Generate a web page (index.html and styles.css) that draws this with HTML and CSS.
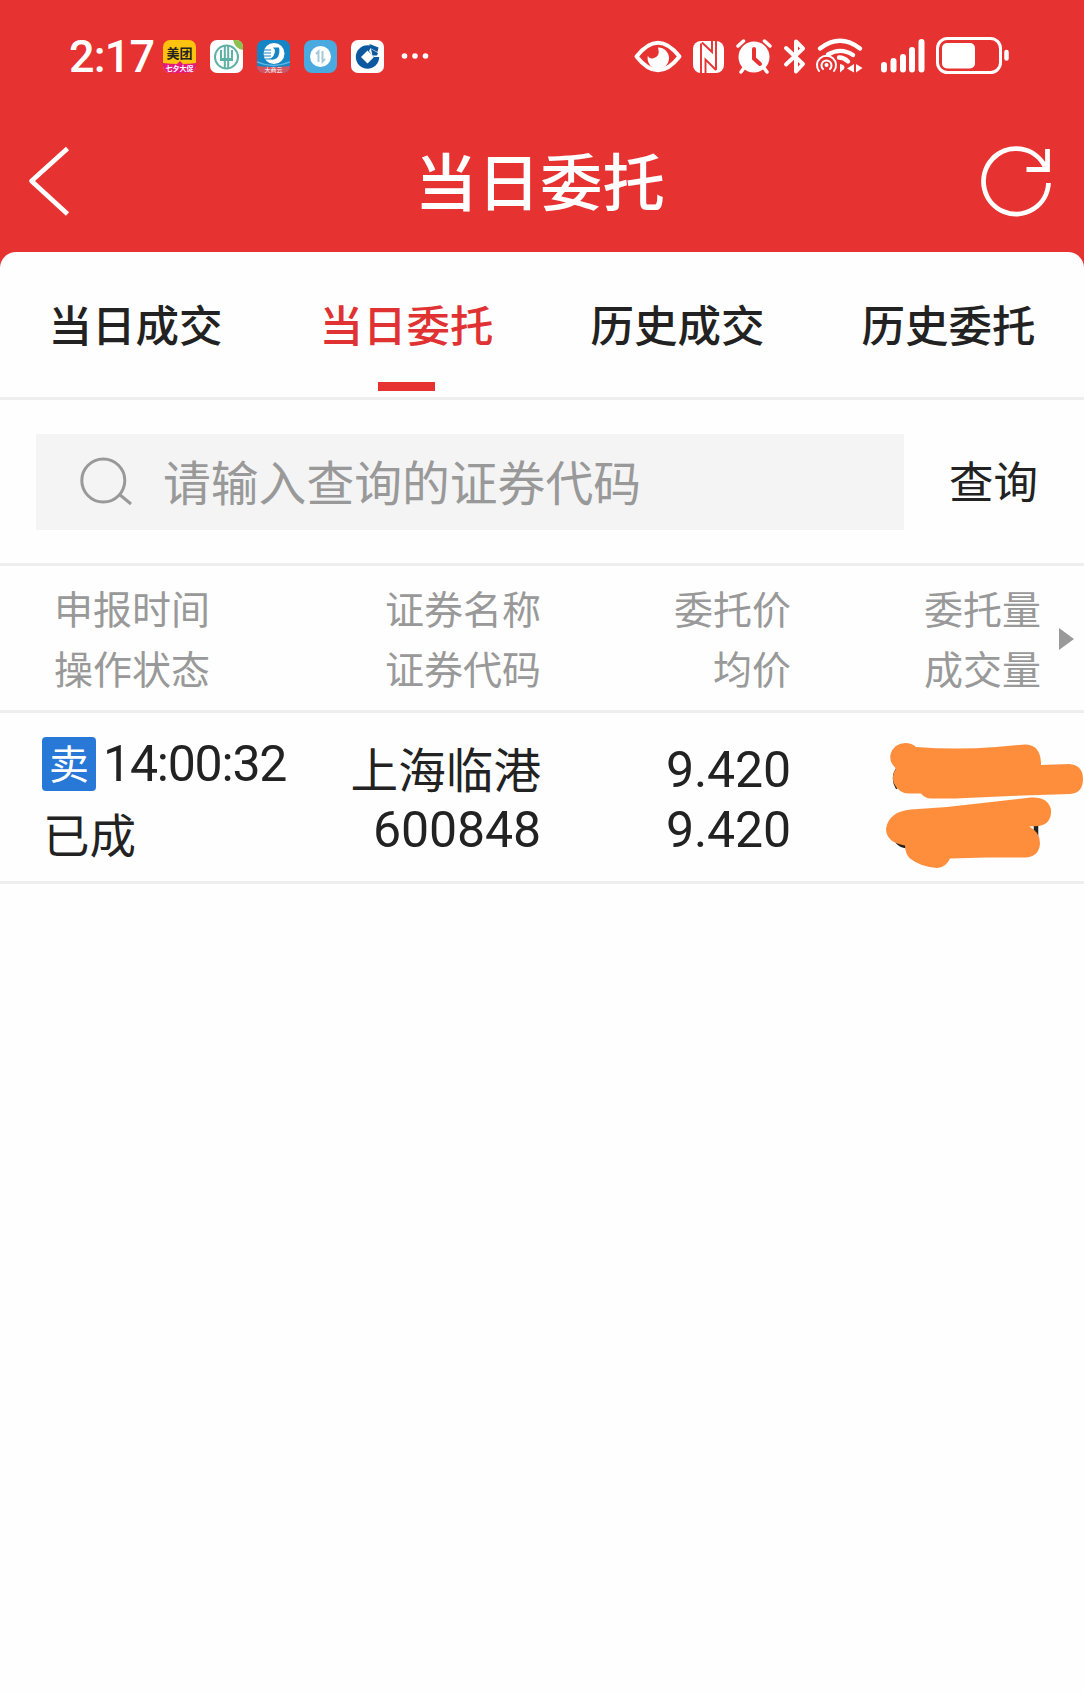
FILE: index.html
```html
<!DOCTYPE html>
<html lang="zh-CN">
<head>
<meta charset="utf-8">
<title>当日委托</title>
<link rel="stylesheet" href="styles.css">
</head>
<body>
<header class="top">
  <div class="status">
    <span class="clock">2:17</span>
    <div class="apps">
      <svg class="app" viewBox="0 0 33 33"><defs><clipPath id="r"><rect width="33" height="33" rx="7"/></clipPath></defs><g clip-path="url(#r)"><rect width="33" height="33" fill="#ffc20e"/><path d="M0 23q8 1 14 1l3-3 3 3q7 0 13-1v10H0z" fill="#e5187e"/></g><text x="16.5" y="18" class="app-name">美团</text><text x="16.5" y="31" class="app-promo">七夕大促</text></svg>
      <svg class="app" viewBox="0 0 33 33"><rect width="33" height="33" rx="7" fill="#fff"/><path d="M23 0h3q7 0 7 7v3Q25 9 23 0z" fill="#8cc152"/><g fill="none" stroke="#5fb0a5"><circle cx="16.500" cy="17" r="11.500" stroke-width="2"/><path d="M14.800 5v15M18.200 5v15M11 10v9h11v-9" stroke-width="2"/><path d="M14.800 21v7M18.200 21v7M10 20h13" stroke-width="2"/></g></svg>
      <svg class="app" viewBox="0 0 33 33"><g clip-path="url(#r)"><rect width="33" height="33" fill="#1585c5"/><path d="M0 26q16 2 33 0v7H0z" fill="#d5545f"/><path d="M0 22q16 7 33 0" fill="none" stroke="#5db6df" stroke-width="1.500"/></g><circle cx="17" cy="13.500" r="10.500" fill="#fff"/><path d="M16 7.500h6q1.500 6-2 10.500-4 3-8 1 6-2 6-9z" fill="#1585c5"/><path d="M6 10h8M5 13h9M6 16h8M8 19h5" stroke="#1585c5" stroke-width="1"/><text x="16.500" y="32" class="app-cloud">大商云</text></svg>
      <svg class="app" viewBox="0 0 33 33"><rect width="33" height="33" rx="8" fill="#4aa9df"/><circle cx="16.500" cy="16.500" r="10.500" fill="#fff"/><path d="M12 14l2.500-2.500V22M18.500 11v10.500L21 19" fill="none" stroke="#a5c9d9" stroke-width="2"/></svg>
      <svg class="app" viewBox="0 0 33 33"><rect width="33" height="33" rx="7" fill="#fff"/><circle cx="16.500" cy="17" r="11.700" fill="#0b58a0"/><path d="M16.500 10.500L23 17l-6.500 6.500L10 17zM18 11l4.500 6H33v-4l-4-5-8-3z" fill="#fff"/><path d="M18.500 4l9 3.500-1 4.500-7.500-4zM20 9l7 4-1 2.500h-4.500z" fill="#0b58a0"/></svg>
    </div>
    <svg class="more" viewBox="0 0 28 8" fill="#fff"><circle cx="3.500" cy="4" r="2.800"/><circle cx="14" cy="4" r="2.800"/><circle cx="24.500" cy="4" r="2.800"/></svg>
    <svg class="system" viewBox="630 30 390 50" fill="none" stroke="#fff" stroke-linecap="round">
      <path d="M637.500 56.500Q659 29 680.500 56.500Q659 84 637.500 56.500z" stroke-width="4" stroke-linejoin="round"/>
      <path d="M659 47.500a10.700 10.700 0 1 1-10.200 8.500q2 3 5 2.500 8-2 5.200-11z" fill="#fff" stroke="none"/>
      <rect x="694" y="41" width="31" height="32" rx="8" fill="#fff" stroke="none"/>
      <path d="M702 43.500V73M717 41v29M703 42.500L713 52V41M706.500 73V59.500L717 70" stroke="#e73232" stroke-width="1.900" stroke-linecap="butt"/>
      <circle cx="755" cy="57" r="15.500" fill="#fff" stroke="none"/>
      <path d="M739 46l5.500-5M771 46l-5.500-5M745 68l-3 4M765 68l3 4" stroke-width="3.500"/>
      <path d="M755 49v9.500l6 5.500" stroke="#e73232" stroke-width="4"/>
      <path d="M787 48l17 16-7 7.500V41.500l7 7-17 16" stroke-width="4" stroke-linejoin="round"/>
      <path d="M821 48.500Q841 33 861 48.500M829 54.500Q842 47 854 55M840 57.500q5 0 9 4" stroke-width="4.400"/>
      <path d="M820 71a9.500 9.500 0 1 1 15 0M824 69a5 5 0 1 1 7 0" stroke-width="2"/><circle cx="827.500" cy="65" r="2" fill="#fff" stroke="none"/>
      <path d="M841 64q6 1 4 5l-4 3.500zM855 64v8.500l-7-4zM857 64l6.500 4-6.500 4.500z" fill="#fff" stroke="none"/>
      <path d="M885 65v4.500M894.500 61v8.500M904 57v12.500M913 50v19.500M922.500 42v27.500" stroke-width="6"/>
      <rect x="938.500" y="38.500" width="63" height="34" rx="10" stroke-width="3"/><rect x="943" y="43" width="33" height="25.500" rx="5" fill="#fff" stroke="none"/><path d="M1007.500 52v6.500" stroke-width="4.500"/>
    </svg>
  </div>
  <div class="titlebar">
    <svg class="back" viewBox="26 144 46 74"><path d="M67.500 148.500L31.500 181l36 33" fill="none" stroke="#fff" stroke-width="4.700" stroke-linejoin="round"/></svg>
    <h1 class="title">当日委托</h1>
    <svg class="refresh" viewBox="981 145 74 74" fill="none" stroke="#fff" stroke-width="4.800"><path d="M1049.500 183A32.500 32.700 0 1 1 1046 166.500M1048.500 149v20.500h-21"/></svg>
  </div>
</header>
<main class="panel">
  <nav class="tabs">
    <a class="tab">当日成交</a>
    <a class="tab tab-active">当日委托</a>
    <a class="tab">历史成交</a>
    <a class="tab">历史委托</a>
  </nav>
  <section class="search">
    <div class="field">
      <svg class="lens" viewBox="80 457 54 50" fill="none" stroke="#999" stroke-width="3"><circle cx="103.300" cy="480.500" r="21.500"/><path d="M119.500 494.500L131 504"/></svg>
      <span class="placeholder">请输入查询的证券代码</span>
    </div>
    <span class="query">查询</span>
  </section>
  <section class="columns">
    <div class="cell cell-first">申报时间<br>操作状态</div>
    <div class="cell">证券名称<br>证券代码</div>
    <div class="cell">委托价<br>均价</div>
    <div class="cell">委托量<br>成交量</div>
    <svg class="next" viewBox="0 0 15 22"><path d="M0 0L15 11 0 22z" fill="#999"/></svg>
  </section>
  <section class="order">
    <div class="when">
      <div class="when-line"><span class="side">卖</span><span class="time">14:00:32</span></div>
      <div class="state">已成</div>
    </div>
    <div class="value"><span class="name">上海临港</span><span class="number">600848</span></div>
    <div class="value"><span class="number">9.420</span><span class="number">9.420</span></div>
    <svg class="redacted" viewBox="885 737 200 136">
      <path d="M899 769q-6 9 0 19M909 814q-8 1-11 6M898 841q4 5 11 5M1037 824v16" fill="none" stroke="#222" stroke-width="4.500"/>
      <path d="M906 743q7 0 11 4 40 3 80 0l29-2.500q15 0 16 18v2.500l28-1q14 1 14 15 0 14-13 15l-59 2-56 2.500h-24q-6 0-10-5h-12q-10 0-15-10-3-8 2-15-7-6-5.500-14 3-11 14.500-11.500z" fill="#ff8e3c"/>
      <path d="M912 809.500l36-2.500 84-9.500q17-1 20 12 1 14-12 16.500l-10 .5q11 5 11 17-1 13-14 14h-40l-36 1q-4 9-13 9.500-16-1-27-9.500-5-5-5-13-19-3-19-17 3-17 25-19z" fill="#ff8e3c"/>
    </svg>
  </section>
</main>
</body>
</html>
```

FILE: styles.css
```css
* { box-sizing: border-box; }
body {
  margin: 0;
  min-height: 1694px;
  background: #fefefe;
  color: #222;
  font-family: "Noto Sans CJK SC", sans-serif;
}
svg { display: block; flex: none; }
.top { height: 270px; background: #e73232; color: #fff; }
.status { display: flex; align-items: center; height: 112px; padding-left: 69px; }
.clock { width: 94px; font-family: Roboto, sans-serif; font-size: 45px; line-height: 60px; font-weight: 500; letter-spacing: -0.8px; margin-top: 2px; }
.apps { display: flex; gap: 14px; }
.app { width: 33px; height: 33px; }
.app-name { font-size: 13px; font-weight: 700; text-anchor: middle; fill: #222; }
.app-promo { font-size: 7px; font-weight: 700; text-anchor: middle; fill: #fff; }
.app-cloud { font-size: 6px; text-anchor: middle; fill: #fff; }
.more { width: 28px; height: 8px; margin-left: 17px; }
.system { width: 390px; height: 50px; margin-left: 200px; margin-top: -2px; }
.titlebar { display: flex; justify-content: space-between; align-items: center; height: 138px; padding: 0 30px 0 26px; }
.back { width: 46px; height: 74px; margin-right: 28px; }
.title { margin: -5px 0 0; font-size: 62.5px; line-height: 90px; font-weight: 500; letter-spacing: 0.1px; }
.refresh { width: 74px; height: 74px; margin-top: 1px; }
.panel { margin-top: -18px; background: #fefefe; border-radius: 16px 16px 0 0; }
.tabs { display: grid; grid-template-columns: repeat(4, 1fr); height: 148px; border-bottom: 3px solid #eee; }
.tab { display: flex; flex-direction: column; align-items: center; padding-top: 42px; font-size: 43.5px; line-height: 60px; font-weight: 500; }
.tab-active { color: #e03232; }
.tab-active::after { content: ""; width: 57px; height: 9px; margin-top: 28px; background: #e73232; }
.search { display: flex; height: 166px; padding: 34px 0 0 36px; border-bottom: 3px solid #eee; }
.field { display: flex; align-items: center; width: 868px; height: 96px; padding-left: 44px; background: #f4f4f4; }
.lens { width: 54px; height: 50px; }
.placeholder { margin: -3px 0 0 29px; font-size: 47.8px; line-height: 70px; color: #999; }
.query { margin-left: 45px; font-size: 44.5px; line-height: 91px; font-weight: 400; }
.columns { display: grid; grid-template-columns: 291px 250px 250px 250px 43px; height: 147px; padding-top: 11px; border-bottom: 3px solid #eee; font-size: 39px; line-height: 60px; color: #999; }
.cell { text-align: right; }
.cell-first { text-align: left; padding-left: 54px; }
.next { width: 15px; height: 22px; margin: 51px 0 0 18px; }
.order { display: grid; grid-template-columns: 291px 250px 250px 93px 200px; height: 171px; border-bottom: 3px solid #eee; padding-top: 24px; font-size: 48px; line-height: 60px; }
.when { padding-left: 42px; }
.when-line { display: flex; height: 54px; gap: 7px; }
.side { width: 54px; height: 54px; border-radius: 4px; background: #2878d8; color: #fff; font-size: 40px; line-height: 50px; text-align: center; }
.time, .number { font-family: Roboto, sans-serif; font-size: 50px; }
.time { line-height: 54px; letter-spacing: -1.2px; }
.state { padding-left: 1px; font-size: 46.5px; line-height: 84px; }
.value { display: flex; flex-direction: column; align-items: flex-end; padding-top: 2px; }
.name { font-size: 47.6px; margin: -1px 0 1px; }
.number { letter-spacing: -0.1px; padding-top: 1px; height: 60px; }
.redacted { grid-column: 5; width: 200px; height: 136px; }
```
